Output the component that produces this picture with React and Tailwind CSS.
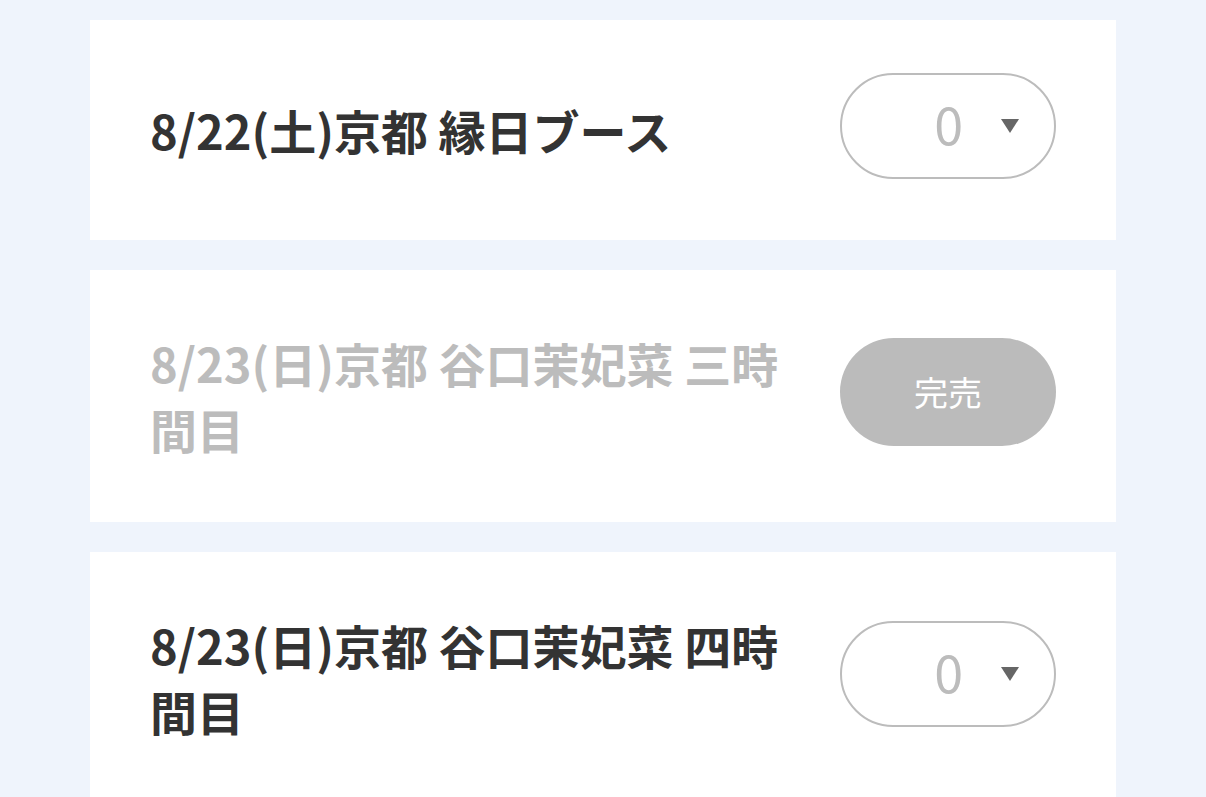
import React from "react";

const font = { fontFamily: '"Noto Sans CJK JP", "Noto Sans", sans-serif' };

function Select() {
  return (
    <div className="w-[216px] h-[106px] mb-[8px] shrink-0 rounded-full border-2 border-[#bcbcbc] bg-white flex items-center justify-end pr-[35px]">
      <span className="text-[52px] leading-none font-normal text-[#bcbcbc] mb-[6px]">0</span>
      <svg width="18" height="14" viewBox="0 0 18 14" className="ml-[38px]">
        <polygon points="0,0 18,0 9,14" fill="#666666" />
      </svg>
    </div>
  );
}

function SoldOut() {
  return (
    <div className="w-[216px] h-[108px] mb-[8px] shrink-0 rounded-full bg-[#bbbbbb] flex items-center justify-center">
      <span className="text-[34px] leading-none font-normal text-white">完売</span>
    </div>
  );
}

function Card({ title, sold }) {
  return (
    <div className="bg-white px-[60px] py-[53px] flex items-center justify-between gap-[40px]">
      <div
        className={
          "flex-1 text-[47px] leading-[66px] py-[7px] font-bold " +
          (sold ? "text-[#bcbcbc]" : "text-[#333333]")
        }
      >
        {title}
      </div>
      {sold ? <SoldOut /> : <Select />}
    </div>
  );
}

export default function App() {
  return (
    <div className="w-[1206px] h-[797px] overflow-hidden bg-[#eff4fc] px-[90px] pt-[20px] flex flex-col gap-[30px]" style={font}>
      <Card title="8/22(土)京都 縁日ブース" />
      <Card title="8/23(日)京都 谷口茉妃菜 三時間目" sold />
      <Card title="8/23(日)京都 谷口茉妃菜 四時間目" />
    </div>
  );
}
